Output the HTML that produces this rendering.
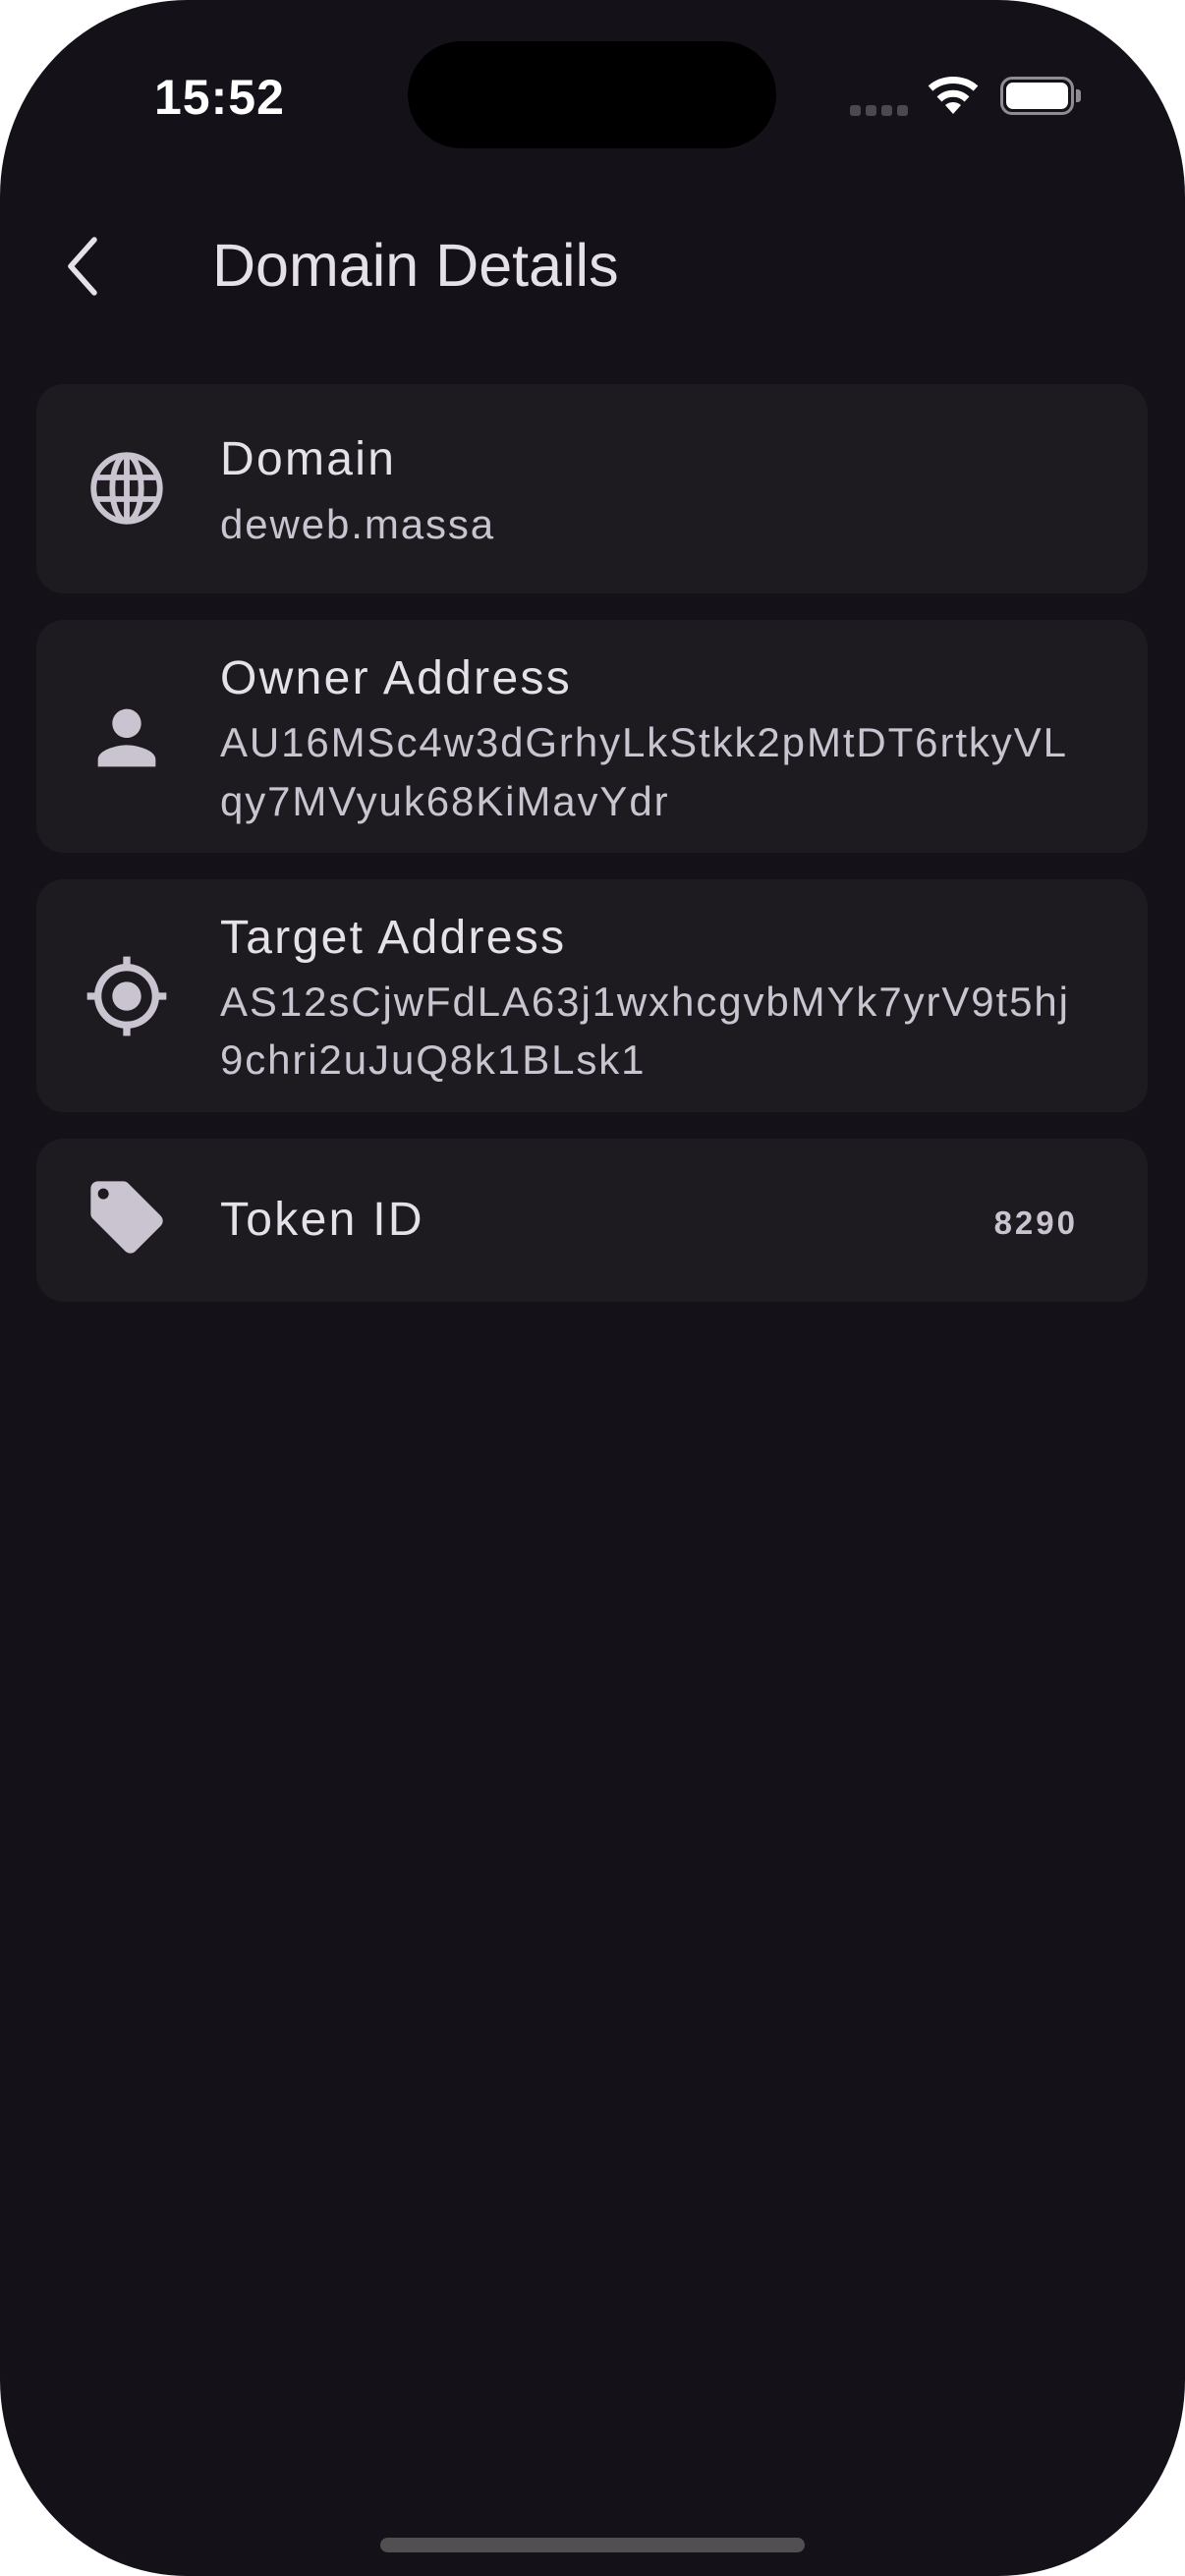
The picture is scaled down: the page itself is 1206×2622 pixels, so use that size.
<!DOCTYPE html>
<html><head><meta charset="utf-8"><style>
*{margin:0;padding:0;box-sizing:border-box}
html,body{width:1206px;height:2622px;background:#fff;overflow:hidden}
.phone{position:absolute;left:0;top:0;width:1206px;height:2622px;background:#141218;border-radius:190px/200px;overflow:hidden;font-family:"Liberation Sans",sans-serif}
.island{position:absolute;left:415px;top:42px;width:375px;height:109px;background:#000;border-radius:55px}
.time{position:absolute;left:157px;top:70px;font-size:50px;font-weight:bold;color:#fff;letter-spacing:1px}
.dot{position:absolute;top:107px;width:11px;height:11px;border-radius:3px;background:#4a494e}
.title{position:absolute;left:216px;top:235px;font-size:61px;color:#e6e0e9;white-space:nowrap}
.card{position:absolute;left:37px;width:1131px;background:#1d1b20;border-radius:28px}
.ic{position:absolute;left:85px;width:88px;height:88px}
.t{position:absolute;left:224px;font-size:48px;color:#e6e0e9;letter-spacing:2.3px;white-space:nowrap;line-height:60px}
.s{position:absolute;left:224px;font-size:42px;color:#cac4d0;letter-spacing:1.9px;white-space:nowrap;line-height:60px}
.home{position:absolute;left:387px;top:2583px;width:432px;height:15px;border-radius:8px;background:#505050}
</style></head><body>
<div class="phone">
<div class="time">15:52</div>
<div class="island"></div>
<div class="dot" style="left:865px"></div><div class="dot" style="left:881px"></div><div class="dot" style="left:897px"></div><div class="dot" style="left:913px"></div>
<svg style="position:absolute;left:942px;top:76px" width="56" height="42" viewBox="0 0 56 42"><path d="M28 40 L20 31 A12 12 0 0 1 36 31 Z" fill="#fff"/><path d="M14 25 A20 20 0 0 1 42 25" stroke="#fff" stroke-width="7" fill="none"/><path d="M5 14 A33 30 0 0 1 51 14" stroke="#fff" stroke-width="7" fill="none"/></svg>
<div style="position:absolute;left:1018px;top:78px;width:75px;height:39px;border:3px solid #8e8d92;border-radius:12px"></div>
<div style="position:absolute;left:1024px;top:84px;width:63px;height:27px;background:#fff;border-radius:7px"></div>
<div style="position:absolute;left:1095px;top:91px;width:5px;height:13px;background:#8e8d92;border-radius:0 3px 3px 0"></div>
<svg style="position:absolute;left:62px;top:240px" width="44" height="62" viewBox="0 0 44 62"><path d="M34 4 L10 31 L34 58" stroke="#e6e0e9" stroke-width="5.5" fill="none" stroke-linecap="round" stroke-linejoin="round"/></svg>
<div class="title">Domain Details</div>

<div class="card" style="top:391px;height:213px"></div>
<svg class="ic" style="top:453px" viewBox="0 0 24 24"><g fill="none" stroke="#cac4d0" stroke-width="1.6"><circle cx="12" cy="12" r="9.2"/><ellipse cx="12" cy="12" rx="4" ry="9.2"/><line x1="12" y1="2.8" x2="12" y2="21.2"/><line x1="2.8" y1="9" x2="21.2" y2="9"/><line x1="2.8" y1="15" x2="21.2" y2="15"/></g></svg>
<div class="t" style="top:438px">Domain</div>
<div class="s" style="top:504px">deweb.massa</div>

<div class="card" style="top:631px;height:237px"></div>
<svg class="ic" style="top:707px" viewBox="0 0 24 24"><path fill="#cac4d0" d="M12 12c2.21 0 4-1.79 4-4s-1.79-4-4-4-4 1.79-4 4 1.79 4 4 4zm0 2c-2.67 0-8 1.34-8 4v2h16v-2c0-2.66-5.33-4-8-4z"/></svg>
<div class="t" style="top:661px">Owner Address</div>
<div class="s" style="top:726px">AU16MSc4w3dGrhyLkStkk2pMtDT6rtkyVL</div>
<div class="s" style="top:786px">qy7MVyuk68KiMavYdr</div>

<div class="card" style="top:895px;height:237px"></div>
<svg class="ic" style="top:970px" viewBox="0 0 24 24"><path fill="#cac4d0" d="M12 8c-2.21 0-4 1.79-4 4s1.79 4 4 4 4-1.790 4-4-1.79-4-4-4zm8.94 3c-.46-4.17-3.770-7.48-7.94-7.94V1h-2v2.06C6.83 3.52 3.52 6.83 3.06 11H1v2h2.06c.46 4.17 3.77 7.48 7.94 7.94V23h2v-2.06c4.17-.46 7.48-3.77 7.94-7.94H23v-2h-2.060zM12 19c-3.87 0-7-3.13-7-7s3.13-7 7-7 7 3.13 7 7-3.13 7-7 7z"/></svg>
<div class="t" style="top:925px">Target Address</div>
<div class="s" style="top:990px">AS12sCjwFdLA63j1wxhcgvbMYk7yrV9t5hj</div>
<div class="s" style="top:1049px">9chri2uJuQ8k1BLsk1</div>

<div class="card" style="top:1159px;height:166px"></div>
<svg class="ic" style="top:1195px" viewBox="0 0 24 24"><path fill="#cac4d0" d="M21.41 11.58l-9-9C12.05 2.22 11.55 2 11 2H4c-1.1 0-2 .9-2 2v7c0 .55.22 1.05.59 1.42l9 9c.36.36.86.58 1.41.58.55 0 1.05-.22 1.41-.59l7-7c.37-.36.59-.86.59-1.41 0-.55-.23-1.06-.59-1.42zM5.5 7C4.67 7 4 6.33 4 5.5S4.67 4 5.5 4 7 4.67 7 5.5 6.33 7 5.5 7z"/></svg>
<div class="t" style="top:1212px">Token ID</div>
<div style="position:absolute;right:109px;top:1226px;font-size:33px;font-weight:bold;color:#cac4d0;letter-spacing:3px">8290</div>

<div class="home"></div>
</div>
</body></html>
